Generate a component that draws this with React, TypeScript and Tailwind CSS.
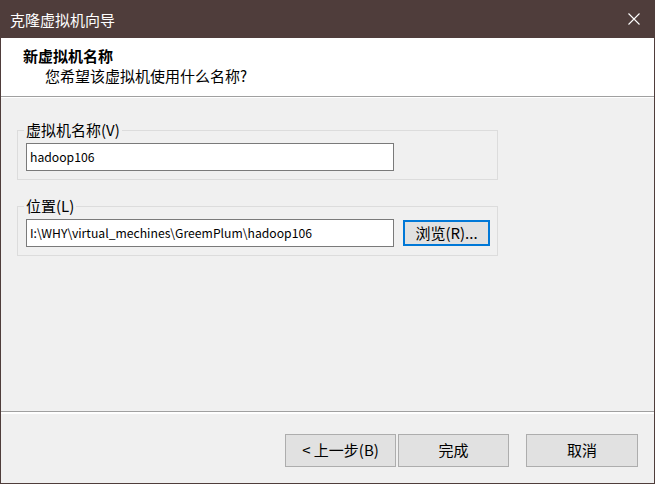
import React from "react";

const FONT = "font-['Microsoft_YaHei','Noto_Sans_CJK_SC',sans-serif]";

function CloseIcon() {
  return (
    <svg width="12" height="12" viewBox="0 0 12 12" className="block">
      <path d="M0.5 0.5 L11.5 11.5 M11.5 0.5 L0.5 11.5" stroke="#ffffff" strokeWidth="1.1" fill="none" />
    </svg>
  );
}

function Group({ label, children }: { label: React.ReactNode; children: React.ReactNode }) {
  return (
    <fieldset className="w-[481px] border border-[#dcdcdc]">
      <legend className="ml-[6px] px-[2px] text-[15px] leading-[20px] text-black">{label}</legend>
      <div className="pl-[8px] pb-[8px] pt-[3px]">{children}</div>
    </fieldset>
  );
}

function TextBox({ value }: { value: string }) {
  return (
    <div className="w-[368px] h-[28px] shrink-0 border border-[#7a7a7a] bg-white flex items-center pl-[3px] text-[12.2px] text-black whitespace-nowrap overflow-hidden">
      {value}
    </div>
  );
}

function Button({ children, focused }: { children: React.ReactNode; focused?: boolean }) {
  return (
    <div
      className={
        focused
          ? "flex-1 flex items-center justify-center whitespace-nowrap border-2 border-[#0078d7] bg-[#e1e1e1] text-[15px] text-black"
          : "flex-1 flex items-center justify-center whitespace-nowrap border border-[#adadad] bg-[#e1e1e1] text-[15px] text-black"
      }
    >
      {children}
    </div>
  );
}

export default function App() {
  return (
    <div className={`w-[655px] h-[484px] flex flex-col bg-[#f0f0f0] ${FONT}`}>
      {/* title bar */}
      <div className="h-[38px] shrink-0 bg-[#4f3d3b] flex items-center justify-between pl-[10px] pr-[15px]">
        <span className="text-[15px] text-white leading-none">克隆虚拟机向导</span>
        <CloseIcon />
      </div>

      <div className="flex-1 flex flex-col border-x border-b border-[#4f3d3b]">
        {/* header */}
        <div className="h-[58px] shrink-0 bg-white pt-[8px]">
          <div className="pl-[22px] text-[15px] leading-[20px] font-bold text-black">新虚拟机名称</div>
          <div className="pl-[44px] text-[15px] leading-[20px] text-black">您希望该虚拟机使用什么名称?</div>
        </div>
        <div className="h-px bg-[#a0a0a0]" />
        <div className="h-px bg-white" />

        {/* content */}
        <div className="h-[313px] shrink-0 flex flex-col gap-[16px] pl-[16px] pt-[22px]">
          <Group label="虚拟机名称(V)">
            <TextBox value="hadoop106" />
          </Group>
          <Group label="位置(L)">
            <div className="flex items-center gap-[9px]">
              <TextBox value="I:\WHY\virtual_mechines\GreemPlum\hadoop106" />
              <div className="w-[87px] h-[26px] flex">
                <Button focused>浏览(R)...</Button>
              </div>
            </div>
          </Group>
        </div>

        {/* footer */}
        <div className="h-px bg-[#a0a0a0]" />
        <div className="h-[2px] bg-white" />
        <div className="flex-1 flex justify-end items-start pt-[20px] pr-[16px]">
          <div className="flex w-[111px] h-[33px]">
            <Button>&lt; 上一步(B)</Button>
          </div>
          <div className="flex w-[111px] h-[33px] ml-[2px]">
            <Button>完成</Button>
          </div>
          <div className="flex w-[112px] h-[33px] ml-[17px]">
            <Button>取消</Button>
          </div>
        </div>
      </div>
    </div>
  );
}
